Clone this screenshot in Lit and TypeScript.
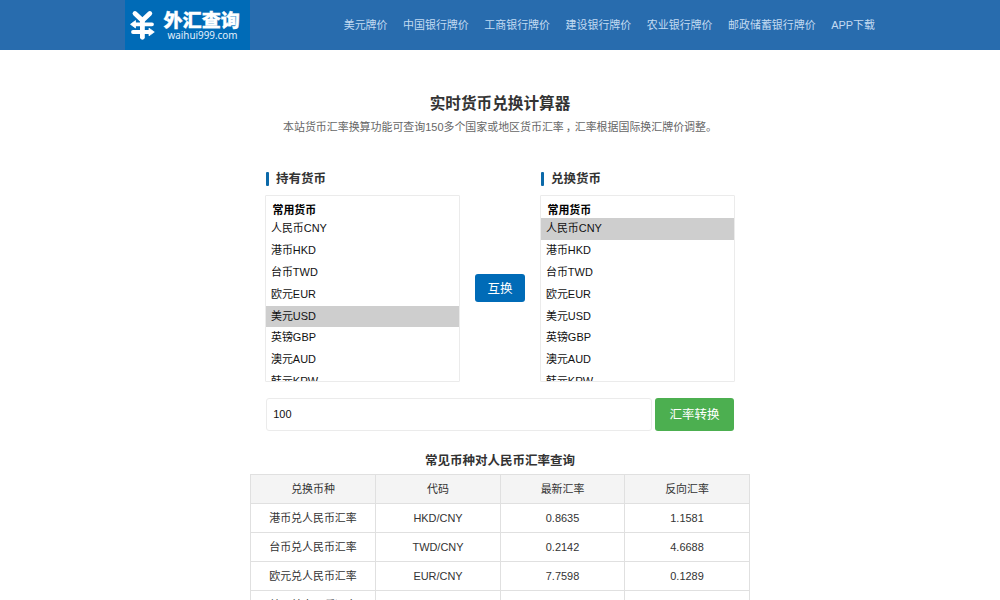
import { LitElement, html, css } from "lit";
import { customElement, property } from "lit/decorators.js";
import { classMap } from "lit/directives/class-map.js";

const NAV = ["美元牌价", "中国银行牌价", "工商银行牌价", "建设银行牌价", "农业银行牌价", "邮政储蓄银行牌价", "APP下载"];
const CURRENCIES = ["人民币CNY", "港币HKD", "台币TWD", "欧元EUR", "美元USD", "英镑GBP", "澳元AUD", "韩元KRW"];
const RATES = [
  ["港币兑人民币汇率", "HKD/CNY", "0.8635", "1.1581"],
  ["台币兑人民币汇率", "TWD/CNY", "0.2142", "4.6688"],
  ["欧元兑人民币汇率", "EUR/CNY", "7.7598", "0.1289"],
  ["美元兑人民币汇率", "USD/CNY", "6.7114", "0.1490"],
];

@customElement("site-header")
class SiteHeader extends LitElement {
  static styles = css`
    :host { display: block; height: 50px; background: #286cae; }
    .inner { width: 750px; height: 50px; margin: 0 auto; display: flex; justify-content: space-between; }
    .logo { width: 125px; height: 50px; background: #006bb7; }
    .logo svg { display: block; }
    .cn { font: 900 18.5px "Noto Sans CJK SC", sans-serif; }
    .en { font: 10.3px "Noto Sans", sans-serif; }
    nav { display: flex; gap: 15.63px; align-items: center; }
    a { color: #c3dbf2; white-space: nowrap; line-height: 51px; }
  `;
  render() {
    return html`<div class="inner">
      <div class="logo">
        <svg width="125" height="50" viewBox="0 0 125 50">
          <g fill="none" stroke="#fff" stroke-width="4.8" stroke-linecap="round" stroke-linejoin="round">
            <path d="M10 13.5 L17.4 20.5 L24.8 13.5" />
            <path d="M17.4 21 V37.3" />
            <path d="M9 24.3 H27 M8 32 H25" stroke-width="3.8" />
          </g>
          <path fill="#fff" stroke="#fff" stroke-width="0.8" stroke-linejoin="round" d="M10.5 20.6 L5.5 24.3 L10.5 28 Z M24 28.2 L29.3 32 L24 35.8 Z" />
          <text class="cn" x="38.5" y="27" fill="#fff" stroke="#fff" stroke-width="0.3" textLength="76.5" lengthAdjust="spacingAndGlyphs">外汇查询</text>
          <text class="en" x="42.5" y="39" fill="#e3f1fc" textLength="70" lengthAdjust="spacingAndGlyphs">waihui999.com</text>
        </svg>
      </div>
      <nav>${NAV.map((n) => html`<a>${n}</a>`)}</nav>
    </div>`;
  }
}

@customElement("currency-list")
class CurrencyList extends LitElement {
  @property() heading = "";
  @property() selected = "";
  static styles = css`
    :host { display: block; width: 195px; }
    h2 { margin: 0 0 7px 1.3px; height: 17px; display: flex; align-items: center; gap: 6.7px; font-size: 12.5px; line-height: 18px; color: #333; }
    .bar { width: 3px; height: 14px; border-radius: 1px; background: #0b69a9; }
    .list { box-sizing: border-box; width: 195px; height: 187px; border: 1px solid #ebebeb; border-radius: 1px; overflow: hidden; padding-top: 6px; color: #111; }
    .group { height: 16.5px; line-height: 17px; padding-left: 6.5px; font-weight: bold; color: #000; }
    .option { height: 21.875px; line-height: 21px; padding-left: 5px; }
    .active { background: #cecece; }
  `;
  render() {
    return html`<h2><span class="bar"></span>${this.heading}</h2>
      <div class="list">
        <div class="group">常用货币</div>
        ${CURRENCIES.map((c) => html`<div class=${classMap({ option: true, active: c === this.selected })}>${c}</div>`)}
      </div>`;
  }
}

@customElement("app-root")
class AppRoot extends LitElement {
  static styles = css`
    :host { display: block; height: 600px; overflow: hidden; background: #fff; color: #333; font: 10.94px "Liberation Sans", "Noto Sans CJK SC", sans-serif; }
    h1 { margin: 42px 0 0; font-size: 15.63px; line-height: 23px; text-align: center; }
    .intro { margin: 3px 0 0; line-height: 18px; color: #666; text-align: center; }
    .comma { display: inline-block; box-sizing: border-box; width: 1em; padding-left: 2px; }
    .pair { width: 470px; margin: 34.6px auto 0; display: flex; justify-content: space-between; }
    button { display: block; padding: 0 0 2px; border: 0; color: #fff; font: inherit; font-size: 12.5px; border-radius: 3px; }
    .swap { width: 50px; height: 28px; margin-top: 103.6px; background: #006bb7; }
    .amount { width: 468.5px; margin: 16px auto 0; display: flex; justify-content: space-between; }
    input { box-sizing: border-box; width: 386.5px; height: 33px; margin: 0; padding: 0 6.5px; border: 1px solid #ebebeb; border-radius: 3px; font: inherit; color: #111; background: #fff; }
    .convert { width: 78.5px; height: 33px; margin-right: 0.5px; background: #4caf50; }
    h3 { margin: 21.4px 0 0; font-size: 12.5px; line-height: 19px; text-align: center; }
    .table { width: 500px; margin: 3px auto 0; box-sizing: border-box; border: solid #e0e0e0; border-width: 1px 0 0 1px; }
    .row { display: grid; grid-template-columns: 125px 125px 124px 125px; }
    .cell { box-sizing: border-box; height: 29px; line-height: 29px; border: solid #e0e0e0; border-width: 0 1px 1px 0; text-align: center; }
    .head { background: #f4f4f4; }
  `;
  render() {
    return html`<site-header></site-header>
      <h1>实时货币兑换计算器</h1>
      <p class="intro">本站货币汇率换算功能可查询150多个国家或地区货币汇率<span class="comma">，</span>汇率根据国际换汇牌价调整。</p>
      <div class="pair">
        <currency-list heading="持有货币" selected="美元USD"></currency-list>
        <button class="swap">互换</button>
        <currency-list heading="兑换货币" selected="人民币CNY"></currency-list>
      </div>
      <div class="amount"><input .value=${"100"} /><button class="convert">汇率转换</button></div>
      <h3>常见币种对人民币汇率查询</h3>
      <div class="table">
        <div class="row head">${["兑换币种", "代码", "最新汇率", "反向汇率"].map((t) => html`<div class="cell">${t}</div>`)}</div>
        ${RATES.map((r) => html`<div class="row">${r.map((t) => html`<div class="cell">${t}</div>`)}</div>`)}
      </div>`;
  }
}
